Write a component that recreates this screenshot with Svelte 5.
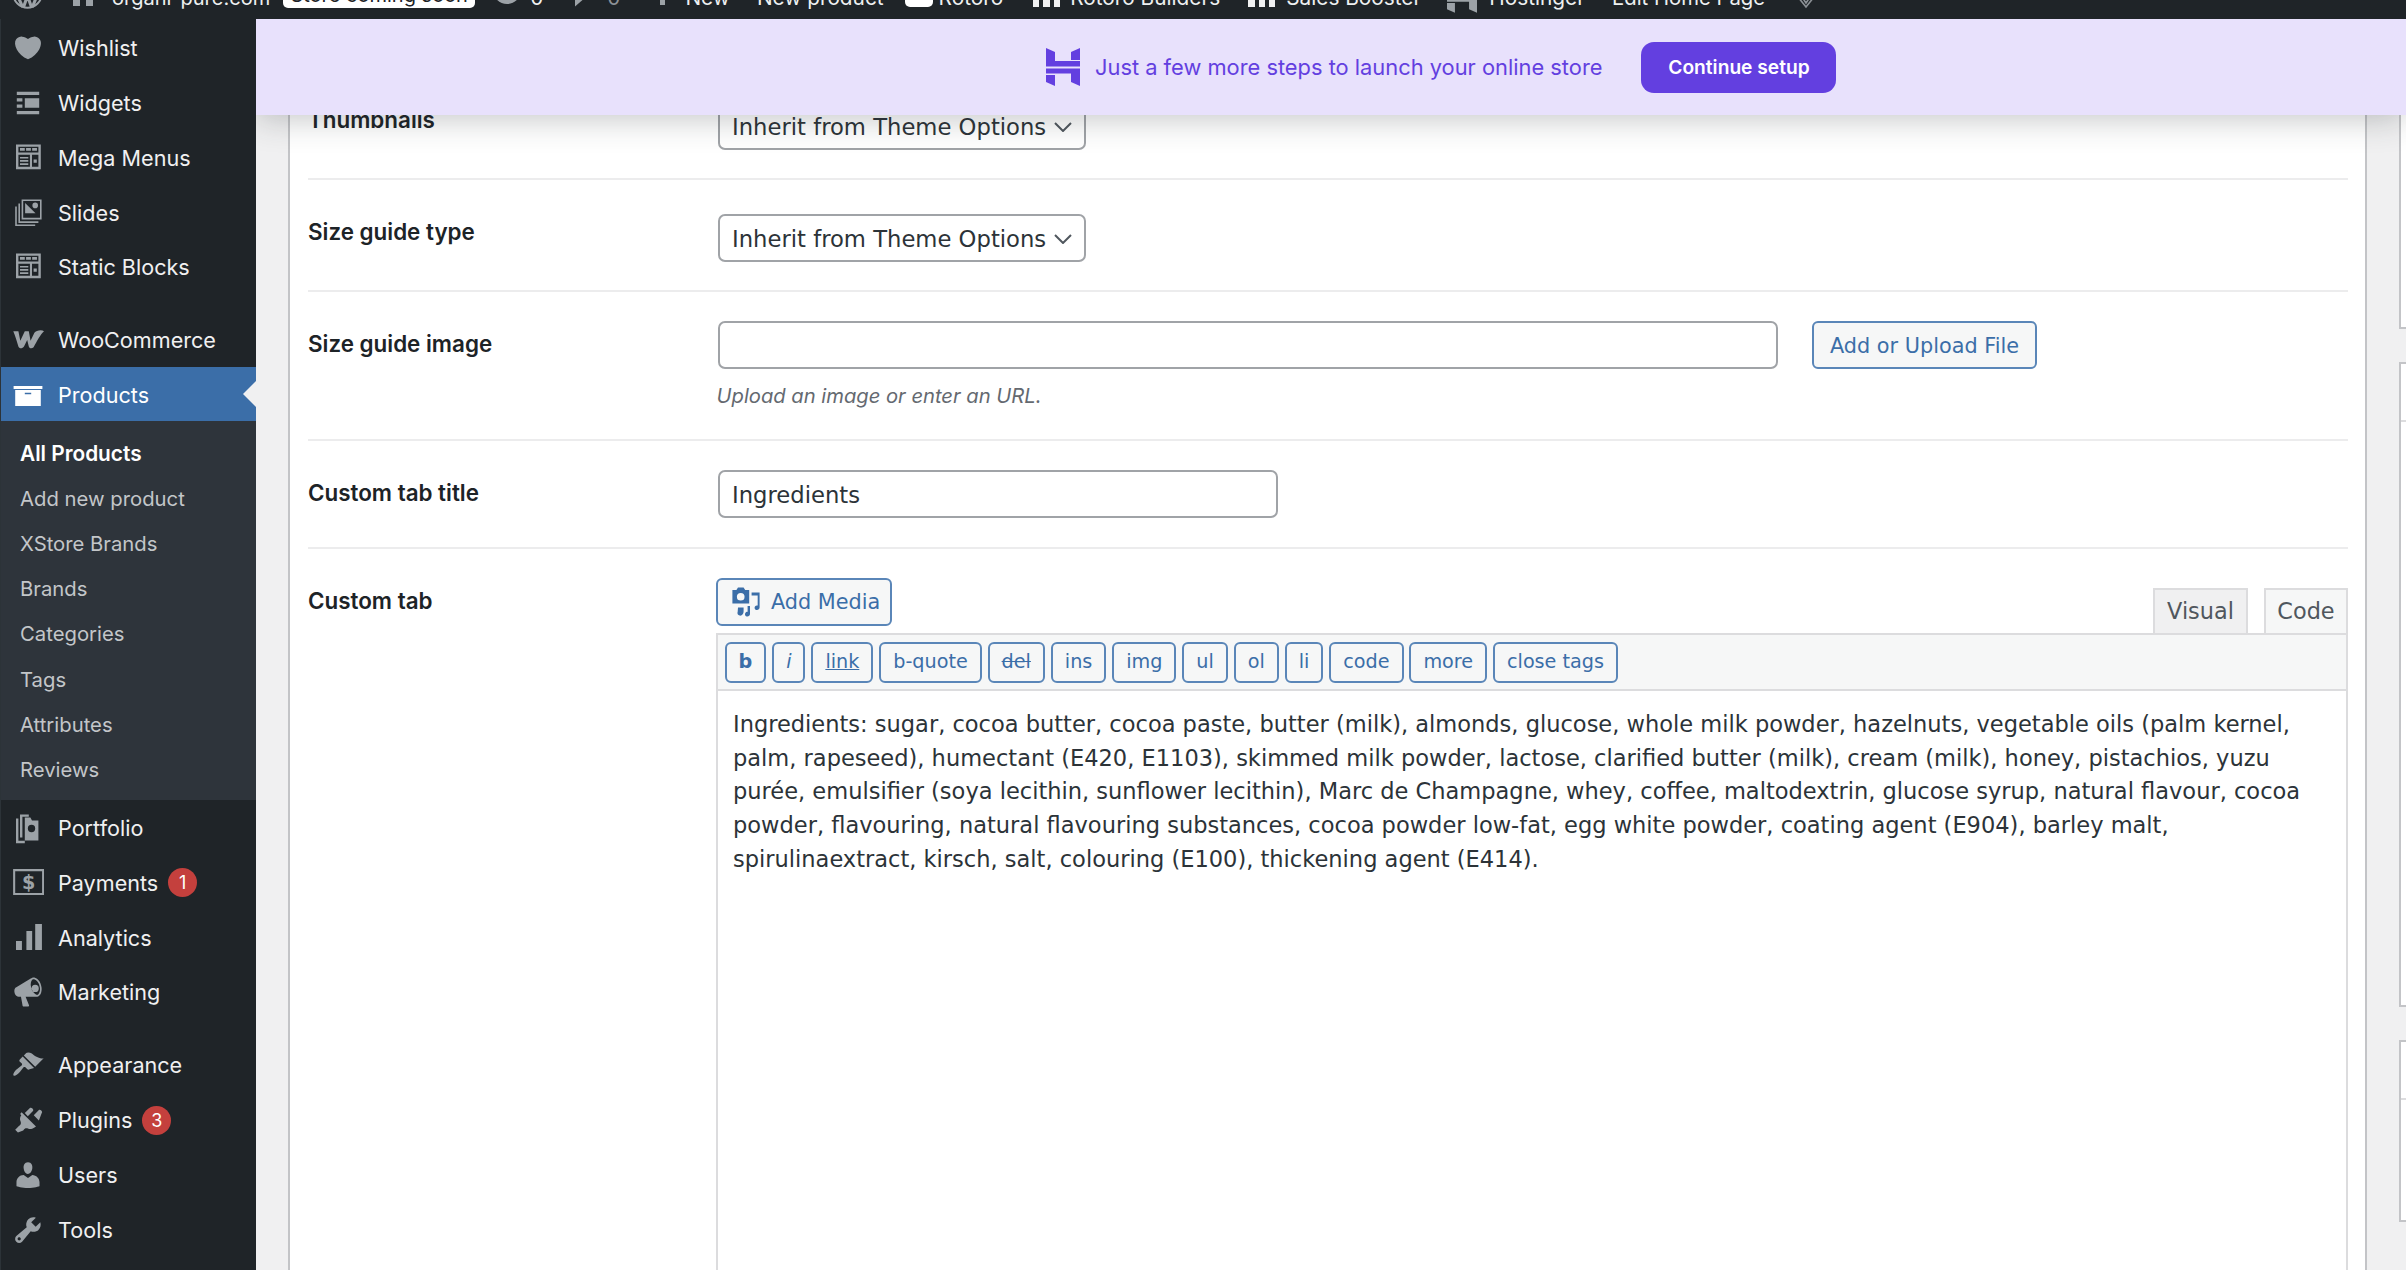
<script>
  const top1 = [
    { label: 'Wishlist', d: 'M10 17.1c3.3-1.4 5.7-3.8 7-6.2 1.3-2.4 1.5-4.8.3-6.3-1-1.3-2.4-1.8-3.7-1.7-1.4 0-2.7.6-3.6 1.5-1-.9-2.3-1.5-3.6-1.5-1.4-.1-2.7.4-3.8 1.7-1.1 1.5-.9 3.9.4 6.3 1.2 2.4 3.7 4.8 7 6.2z' },
    { label: 'Widgets', d: 'M3 3h14v2H3z M3 15h14v2H3z M3 7h3.5v2H3z M3 11h3.5v2H3z M8 7h9v6H8z' },
    { label: 'Mega Menus', d: 'M2.5 1.5h15.500v15.500h-15.500z M4 3h12.500v3.500H4z M5 3.800h3v1.700H5z M8.800 3.800h3v1.700h-3z M12.600 3.800h3v1.700h-3z M4 8h7.200v7.500H4z M5 9.300h5.200v1H5z M5 11.300h5.200v1H5z M5 13.300h5.200v1H5z M12.500 8H16.500v7.500h-4z M13.500 11h2v2h-2z' },
    { label: 'Slides', d: 'M6 1.500h12.500v12.500H6z M7 2.500v10.500h10.500V2.500z M8.200 3.700l6.500 6.500H8.200z M14.500 3.500a1.500 1.500 0 1 1 0 3.500 1.500 1.500 0 1 1 0-3.500z M4 4h1v11.200h11.500v1H4z M2 6h1v11.200h11.500v1H2z' },
    { label: 'Static Blocks', d: 'M2.500 1.500h15.500v15.500h-15.500z M4 3h12.500v3.500H4z M5 3.800h3v1.700H5z M8.800 3.800h3v1.700h-3z M12.600 3.800h3v1.700h-3z M4 8h7.200v7.500H4z M5 9.300h5.200v1H5z M5 11.300h5.200v1H5z M5 13.300h5.200v1H5z M12.500 8H16.500v7.500h-4z M13.500 11h2v2h-2z' },
  ];
  const woo = 'M.8 4.500H4l1.200 6L8 4.500h2.500l1.100 6L14 5.500c1-1.500 4.500-2 6-1-2 1.500-4.500 6.500-6.500 10-1 1-2.500 1-3-.5l-1-4-2 4c-1 1.500-3 1.500-3.500 0-1-3-2-7-3.200-9.500z';
  const productsIcon = 'M1 4.400h18v1.800H1z M2 6.900h16v10H2z M8 8.600v1h4v-1z';
  const sub = ['All Products', 'Add new product', 'XStore Brands', 'Brands', 'Categories', 'Tags', 'Attributes', 'Reviews'];
  const group2 = [
    { label: 'Portfolio', d: 'M8 3.500h3.500l1 1.800h4v12.500H8z M12.200 8a2.300 2.300 0 1 0 0 4.600 2.300 2.300 0 1 0 0-4.600z M5 1.500h5.500V3H6.500v13H5z M2.500 4H4v14h4v1.500H2.500z' },
    { label: 'Payments', badge: '1', glyph: '$', d: 'M.7 1.300h19.400v16.200H.7z M2 2.600v13.600h16.800V2.600z' },
    { label: 'Analytics', d: 'M2.500 11.900h3.700v5.600H2.500z M9 5.600h3.600v11.900H9z M14.500 1.300h4.200v16.200h-4.200z' },
    { label: 'Marketing', d: 'M18.200 5.900c.5 1.600.4 3.200 0 4.500-.4 1.300-1.300 2.200-2.300 2.500-.2.100-.3.100-.4.100l-.2 0H8.500l2.200 5.500c0 .1-.1.300-.1.300-.1.100-.2.200-.3.200H7c-.1 0-.3-.1-.3-.2-.1-.1-.2-.2-.1-.3l-1-5.500H4.300c-.5.100-1.100-.2-1.600-.6s-.9-1.100-1.100-1.900c-.2-.8-.2-1.600 0-2.200.2-.6.600-1.100 1.100-1.300l9-5.400c.3-.2.600-.3 1-.5 1-.3 2.200.1 3.300 1 1 .8 1.800 2.200 2.200 3.800zm-2.600 6c.4-.1.700-.3 1-.7.600-.7.900-1.800.9-3 0-.6-.1-1.300-.3-2-.3-1.400-1-2.500-1.800-3.200-.4-.4-.8-.6-1.200-.8-.4-.2-.8-.2-1.100-.1-.3.100-.6.300-.8.700-.2.300-.4.800-.5 1.400-.2.800-.1 1.700.1 2.700.2.800.5 1.500.8 2.200.5 1 1.100 1.700 1.800 2.200.7.500 1.400.7 2 .5z M14.500 5.500a2 2 0 1 1 0 4.500 2 2 0 1 1 0-4.500z' },
  ];
  const group3 = [
    { label: 'Appearance', d: 'M14.500 11.100L7.400 4l1.500-1.500c.5-.6 2.300-.5 3.500.3 1.200.8 1.400 1.300 2.900 2.100 1.200.6 2.500 1.300 4.500.9zm-.7.700L6.700 4.700 4.900 6.500c-.4.400-.4 1 0 1.400L6 8.900c.4.400.4 1 0 1.400-.6.600-1.400 1.100-2.200 1.700-.4.300-.7.500-1 .8-1.400 1.400-2.400 3.100-1.800 3.700.6.600 2.300-.4 3.600-1.800.3-.3.600-.7.800-1 .6-.8 1.100-1.600 1.700-2.200.4-.4 1-.4 1.400 0l1.100 1.100c.4.400 1 .4 1.400 0z' },
  { label: 'Plugins', badge: '3', d: 'M13.100 4.400L9.900 7.600 8 5.700l3.200-3.200c.4-.4 1.100-.2 1.600.3.500.5.700 1.200.3 1.600zm-8 1.800l.9-1.100 9 9-1.200.8c-1 .7-2.600 1-3.500.6-.9-.4-1.600-.4-2.100-.2-.4.200-.8.600-1.200 1.200L3.700 17.800 2 16.100l2.300-2.400c.5-.3.900-.7 1.100-1.100.3-.5.200-1.200-.2-2.100-.4-.9-.2-2.500.6-3.500zM16.800 10.300l-3.200-3.200 3.200-3.300c.3-.3 1-.2 1.500.3.500.5.700 1.200.3 1.600z' },
    { label: 'Users', d: 'M10 9.300c-2.300 0-2.700-3.400-2.700-3.400C7 4 7.800 2 10 2c2.200 0 3 2 2.700 3.800 0 0-.4 3.500-2.700 3.500zm0 2.500l2.700-1.800c2.400 0 4.500 2.300 4.500 4.500v2.500s-3.600 1.100-7.200 1.100c-3.600 0-7.200-1.100-7.200-1.100v-2.500c0-2.300 1.900-4.500 4.500-4.500z' },
    { label: 'Tools', d: 'M16.700 9.800c-1.300 1.300-3.300 1.700-5 1l-5.400 6.500c-1 1-2.600 1-3.600 0s-1-2.600 0-3.600l6.500-5.400c-.7-1.600-.3-3.600 1-5 1.300-1.300 3.100-1.600 4.700-1l-2.900 2.900 2.800 2.800 2.900-2.900c.5 1.600.2 3.400-1.100 4.700zM3.800 16.200c.4.400 1 .4 1.400 0 .4-.4.4-1 0-1.400-.4-.4-1-.4-1.400 0-.4.400-.4 1 0 1.400z' },
  ];
  const qt = ['b', 'i', 'link', 'b-quote', 'del', 'ins', 'img', 'ul', 'ol', 'li', 'code', 'more', 'close tags'];
  const body = `Ingredients: sugar, cocoa butter, cocoa paste, butter (milk), almonds, glucose, whole milk powder, hazelnuts, vegetable oils (palm kernel,
palm, rapeseed), humectant (E420, E1103), skimmed milk powder, lactose, clarified butter (milk), cream (milk), honey, pistachios, yuzu
purée, emulsifier (soya lecithin, sunflower lecithin), Marc de Champagne, whey, coffee, maltodextrin, glucose syrup, natural flavour, cocoa
powder, flavouring, natural flavouring substances, cocoa powder low-fat, egg white powder, coating agent (E904), barley malt,
spirulinaextract, kirsch, salt, colouring (E100), thickening agent (E414).`;
</script>

{#snippet hlogo(cls)}
  <svg class={cls} viewBox="0 0 34 38" aria-hidden="true">
    <path d="M0 0L9 4V13H34V18.500H0Z" />
    <path d="M25 4L34 0V12H25Z" />
    <path d="M0 20.500H34V38L25 34V25.500H0Z" />
    <path d="M0 27H9V38L0 34Z" />
  </svg>
{/snippet}

{#snippet navitem(it)}
  <a class="item" href="#top">
    <svg class="nav-icon" viewBox="0 0 20 20" aria-hidden="true">
      <path fill-rule="evenodd" d={it.d} />
      {#if it.glyph}<text x="10.400" y="14" text-anchor="middle" class="glyph">{it.glyph}</text>{/if}
    </svg>
    <span>{it.label}</span>
    {#if it.badge}<b class="badge">{it.badge}</b>{/if}
  </a>
{/snippet}

<div class="page">
  <header class="topbar">
    <svg class="tb wp" viewBox="0 0 20 20" aria-hidden="true"><circle cx="10" cy="10" r="9.200" fill="none" stroke="#9ca2a7" stroke-width="1.300"/><path d="M3 10l3.500 8h1.200l2.300-6.500 2.300 6.500h1.200l3.500-9" fill="none" stroke="#9ca2a7" stroke-width="2"/></svg>
    <svg class="tb house" viewBox="0 0 20 20" aria-hidden="true"><path d="M0 0h20v20H13v-6H7v6H0z" fill="#9ca2a7"/></svg>
    <span class="tt site">organi-pure.com</span>
    <span class="pill">Store coming soon</span>
    <span class="tb dot"></span>
    <span class="tt zero">0</span>
    <svg class="tb bubble" viewBox="0 0 16 14" aria-hidden="true"><path d="M0 0h16L0 14z" fill="#9ca2a7"/></svg>
    <span class="tt zero2">0</span>
    <span class="tb plus"></span>
    <span class="tt new">New</span>
    <span class="tt newp">New product</span>
    <span class="tb roto"></span>
    <span class="tt roto-t">Rotoro</span>
    <span class="tb bars b1"><i></i><i></i><i></i></span>
    <span class="tt rb">Rotoro Builders</span>
    <span class="tb bars b2"><i></i><i></i><i></i></span>
    <span class="tt sb">Sales Booster</span>
    <div class="tb hwrap">{@render hlogo('hgrey')}</div>
    <span class="tt host">Hostinger</span>
    <span class="tt edit">Edit Home Page</span>
    <svg class="tb diamond" viewBox="0 0 18 26" aria-hidden="true"><path d="M1 14l8 10 8-10L9 3z M5 14l4 6 4-6" fill="none" stroke="#8c9196" stroke-width="1.600"/></svg>
  </header>

  <div class="shell">
    <nav class="sidebar">
      {#each top1 as it}{@render navitem(it)}{/each}
      <div class="sep"></div>
      {@render navitem({ label: 'WooCommerce', d: woo })}
      <a class="item current" href="#top">
        <svg class="nav-icon" viewBox="0 0 20 20" aria-hidden="true"><path fill-rule="evenodd" d={productsIcon} /></svg>
        <span>Products</span>
      </a>
      <div class="submenu">
        {#each sub as s, i}<a class="sub" class:on={i === 0} href="#top">{s}</a>{/each}
      </div>
      {#each group2 as it}{@render navitem(it)}{/each}
      <div class="sep"></div>
      {#each group3 as it}{@render navitem(it)}{/each}
    </nav>

    <main class="main">
      <div class="banner">
        {@render hlogo('hlogo')}
        <span class="banner-text">Just a few more steps to launch your online store</span>
        <button class="setup">Continue setup</button>
      </div>

      <section class="card">
        <div class="row first">
          <div class="label low">Thumbnails</div>
          <div class="select">Inherit from Theme Options<svg viewBox="0 0 18 10" aria-hidden="true"><path d="M1 1l8 8 8-8" fill="none" stroke="#50575e" stroke-width="2"/></svg></div>
        </div>
        <div class="row">
          <div class="label low">Size guide type</div>
          <div class="select">Inherit from Theme Options<svg viewBox="0 0 18 10" aria-hidden="true"><path d="M1 1l8 8 8-8" fill="none" stroke="#50575e" stroke-width="2"/></svg></div>
        </div>
        <div class="row r3">
          <div class="label">Size guide image</div>
          <div class="field">
            <div class="upload">
              <div class="input wide"></div>
              <div class="btn up">Add or Upload File</div>
            </div>
            <p class="help">Upload an image or enter an URL.</p>
          </div>
        </div>
        <div class="row r4">
          <div class="label">Custom tab title</div>
          <div class="input title">Ingredients</div>
        </div>
        <div class="row r5">
          <div class="label">Custom tab</div>
          <div class="editor">
            <div class="ed-head">
              <div class="btn media">
                <svg viewBox="0 0 20 20" aria-hidden="true"><path fill="currentColor" fill-rule="evenodd" d="M5 1h3.500l1 1.500H12v8.500H1.500V2.500H4z M6.700 4.300a2.400 2.400 0 1 0 0 4.800 2.400 2.400 0 1 0 0-4.800z M13.500 4h5v9.500c0 1.200-1.200 1.800-2.100 1.500-1-.3-1.300-1.400-.8-2.200.4-.6 1.100-.8 1.700-.6V6h-3.800z M11 12.500h1.500v5c0 1.200-1.200 1.800-2.100 1.500-1-.3-1.300-1.400-.8-2.200.4-.6.800-.8 1.400-.6z M5 13.500h3.500V16c0 1.500-1 2.800-2.500 2.500-1-.2-1.700-1.300-1.200-2.400z"/></svg>
                Add Media
              </div>
              <div class="tabs">
                <div class="tab visual">Visual</div>
                <div class="tab code">Code</div>
              </div>
            </div>
            <div class="toolbar">
              {#each qt as q}
                <span class="qt q-{q.replace(' ', '-')}">{q}</span>
              {/each}
            </div>
            <div class="area">{body}</div>
          </div>
        </div>
      </section>

      <aside class="side">
        <div class="box b-a"></div>
        <div class="box b-b"><div class="box-head"></div></div>
        <div class="box b-c"><div class="box-head"></div></div>
      </aside>
    </main>
  </div>
</div>

<style>
  :global(html), :global(body) { margin: 0; height: 100%; overflow: hidden; }
  :global(body) { background: #f0f0f1; font-family: Inter, "Liberation Sans", sans-serif; }
  .page { width: 2406px; height: 1270px; overflow: hidden; background: #f0f0f1; }

  .topbar { height: 19px; background: #1f2428; display: flex; align-items: flex-end; overflow: hidden; color: #eef0f1; font-size: 20.800px; }
  .tt { line-height: 26px; margin-bottom: 8px; white-space: nowrap; flex: none; }
  .tb { flex: none; display: block; }
  .wp { width: 31px; height: 31px; margin: 0 0 10px 12px; }
  .house { width: 20px; height: 20px; margin: 0 0 13px 30px; }
  .site { margin-left: 19px; font-size: 20px; }
  .pill { flex: none; background: #fff; color: #1d2327; border-radius: 5px; width: 192px; box-sizing: border-box; text-align: center; line-height: 26px; margin: 0 0 11.500px 13px; white-space: nowrap; font-size: 20px; }
  .dot { width: 28px; height: 28px; border-radius: 50%; background: #9ca2a7; margin: 0 0 15px 18px; }
  .zero { margin-left: 9px; }
  .bubble { width: 15px; height: 14px; margin: 0 0 12px 32px; }
  .zero2 { margin-left: 17px; color: #8c9196; }
  .plus { width: 5px; height: 22px; background: #9ca2a7; margin: 0 0 14px 40px; }
  .new { margin-left: 20px; }
  .newp { margin-left: 27px; }
  .roto { width: 28px; height: 24px; background: #fff; border-radius: 5px; margin: 0 0 12px 21px; }
  .roto-t { margin-left: 6px; }
  .bars { width: 27px; height: 26px; display: flex; gap: 4px; align-items: flex-end; }
  .bars i { flex: 1; height: 100%; background: #f0f0f1; }
  .bars i:nth-child(3) { height: 85%; }
  .b1 { margin: 0 0 12px 30px; }
  .rb { margin-left: 10px; }
  .b2 { margin: 0 0 12px 28px; }
  .sb { margin-left: 11px; }
  .hwrap { width: 30px; height: 34px; margin: 0 0 6px 26px; }
  .host { margin-left: 12px; }
  .edit { margin-left: 27px; font-size: 20.300px; }
  .diamond { width: 18px; height: 26px; margin: 0 0 10px 32px; }

  .shell { display: flex; height: 1251px; }
  .sidebar { width: 256px; flex: none; background: #1f2428; border-left: 1px solid #2c3338; box-sizing: border-box; padding-top: 1px; color: #f0f0f1; font-size: 21.600px; overflow: hidden; }
  .item { display: flex; align-items: center; box-sizing: border-box; height: 54.800px; padding: 1.500px 0 0 11px; color: #f0f0f1; text-decoration: none; }
  .nav-icon { width: 32px; height: 32px; fill: #9ca2a7; flex: none; margin-right: 14px; }
  .glyph { font: 700 12px "DejaVu Sans", sans-serif; fill: #9ca2a7; }
  .badge { width: 29px; height: 29px; border-radius: 50%; background: #c4403d; color: #fff; font-size: 18px; font-weight: 400; display: flex; align-items: center; justify-content: center; margin-left: 10px; }
  .sep { height: 18px; }
  .current { background: #3b6ea8; color: #fff; position: relative; height: 54px; }
  .current .nav-icon { fill: #fff; }
  .current::after { content: ''; position: absolute; right: 0; top: 50%; margin-top: -13px; border: 13px solid transparent; border-right-color: #f0f0f1; border-left: 0; }
  .submenu { background: #2e343b; padding: 10px 0 8px; }
  .sub { display: flex; align-items: center; height: 45.150px; padding-left: 19px; font-size: 20.300px; color: #c3c6c9; text-decoration: none; }
  .sub.on { color: #fff; font-weight: 600; font-size: 20.800px; }

  .main { flex: 1; min-width: 0; position: relative; display: flex; padding-left: 32px; overflow: hidden; }
  .banner { position: absolute; left: 0; right: 0; top: 0; height: 96px; background: #e8e1fc; z-index: 2; display: flex; align-items: center; padding-left: 790px; box-shadow: 0 2px 34px rgba(40, 45, 50, .3); }
  .hlogo { width: 34px; height: 38px; fill: #633fe0; flex: none; margin-right: 15px; }
  .hgrey { width: 30px; height: 34px; fill: #9ca2a7; display: block; }
  .banner-text { color: #633fe0; font-size: 21.850px; white-space: nowrap; }
  .setup { margin-left: 39px; width: 195px; height: 51px; border: 0; border-radius: 13px; background: #633fe0; color: #fff; font: 600 19.200px Inter, sans-serif; flex: none; }

  .card { width: 2079px; flex: none; box-sizing: border-box; background: #fff; border: solid #c3c4c7; border-width: 0 2px; padding: 0 17px 0 18px; height: 1400px; color: #1d2327; }
  .row { display: flex; border-bottom: 2px solid #ececed; padding: 34px 0 28px; }
  .first { padding-top: 83px; }
  .r3 { padding: 29px 0 0; box-sizing: border-box; height: 149px; }
  .r4 { padding: 29px 0; }
  .r5 { padding: 29px 0 0; border: 0; }
  .label { width: 410px; flex: none; font-size: 22.400px; font-weight: 600; line-height: 34px; margin-top: 6px; }
  .label.low { margin-top: 1px; }
  .select, .input { box-sizing: border-box; height: 48px; background: #fff; border: 2px solid #a0a3a7; border-radius: 7px; font: 22.700px/46px "DejaVu Sans", sans-serif; color: #2c3338; padding-left: 12px; }
  .select { width: 368px; position: relative; white-space: nowrap; }
  .select svg { position: absolute; right: 12px; top: 18px; width: 18px; height: 10px; }
  .input.wide { width: 1060px; }
  .input.title { width: 560px; }
  .upload { display: flex; gap: 34px; }
  .btn { box-sizing: border-box; height: 48px; border: 2px solid #5a86b8; border-radius: 6px; background: #f6f7f7; color: #3b6ea8; font: 20.800px/46px "DejaVu Sans", sans-serif; white-space: nowrap; }
  .up { width: 225px; text-align: center; }
  .help { margin: 11px 0 0 -1.500px; font-size: 20.200px; font-style: italic; color: #646970; line-height: 32px; }

  .editor { margin-left: -2px; width: 1632px; flex: none; }
  .ed-head { display: flex; justify-content: space-between; height: 55px; }
  .media { width: 176px; display: flex; align-items: center; padding-left: 12px; gap: 9px; }
  .media svg { width: 32px; height: 32px; flex: none; }
  .tabs { display: flex; gap: 16px; align-items: flex-end; }
  .tab { box-sizing: border-box; height: 45px; border: 2px solid #dcdcde; border-bottom: 0; font: 22.400px/42px "DejaVu Sans", sans-serif; color: #50575e; text-align: center; }
  .visual { width: 95px; background: #f0f0f1; }
  .code { width: 84px; background: #f6f7f7; }
  .toolbar { box-sizing: border-box; height: 58px; background: #f6f7f7; border: 2px solid #dcdcde; display: flex; gap: 5.900px; padding: 7px 0 0 6.500px; }
  .qt { box-sizing: border-box; height: 41px; border: 2px solid #5a86b8; border-radius: 6px; color: #3b6ea8; background: #f6f7f7; font: 19.200px/36px "DejaVu Sans", sans-serif; padding: 0 12px; white-space: nowrap; }
  .q-b { font-weight: 700; }
  .q-i { font-style: italic; }
  .q-link { text-decoration: underline; }
  .q-del { text-decoration: line-through; }
  .area { box-sizing: border-box; height: 800px; border: solid #dcdcde; border-width: 0 2px; padding: 17px 0 0 15px; font: 22.520px/33.700px "DejaVu Sans", sans-serif; color: #2c3338; white-space: pre-line; background: #fff; }

  .side { width: 100px; flex: none; margin-left: 32px; padding-top: 96px; }
  .box { background: #fff; border: 2px solid #c3c4c7; border-right: 0; box-sizing: border-box; margin-bottom: 33px; }
  .b-a { height: 214px; border-top: 0; }
  .b-b { height: 645px; }
  .b-c { height: 182px; }
  .box-head { height: 56px; border-bottom: 2px solid #dcdcde; }
</style>
